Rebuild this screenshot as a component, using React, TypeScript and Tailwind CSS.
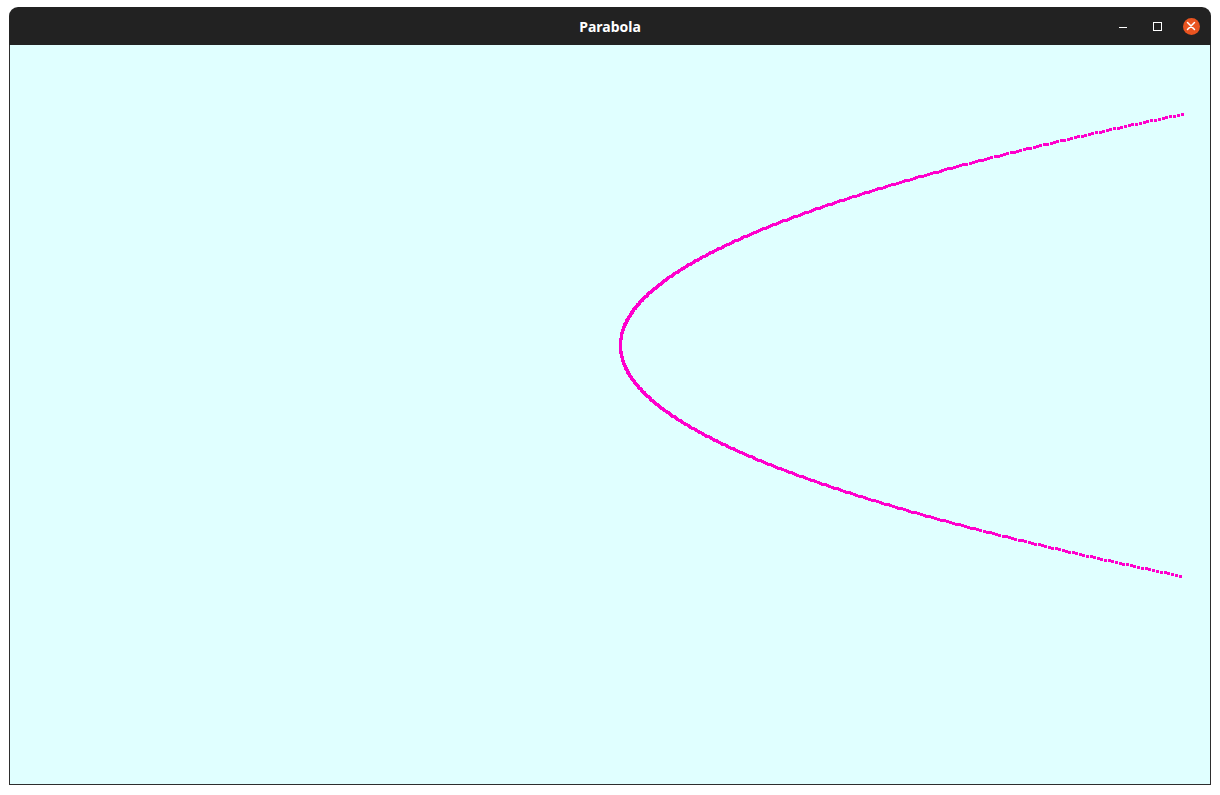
import React from "react";

const pts: { x: number; y: number }[] = [];
for (let s = -231; s <= 231.001; s += 0.8) {
  pts.push({ x: Math.round(610 + 0.01053 * s * s), y: Math.round(300 + s) });
}

export default function App() {
  return (
    <div className="w-[1220px] h-[795px] bg-white pt-[7px] pl-[9px]">
      <div className="w-[1202px] flex flex-col">
        <div className="h-[38px] bg-[#222222] rounded-t-[9px] flex items-center relative">
          <div
            className="flex-1 text-center text-white font-bold text-[14px]"
            style={{ fontFamily: '"Noto Sans", "Open Sans", sans-serif' }}
          >
            Parabola
          </div>
          <div className="absolute right-[3px] top-0 h-[38px] flex items-center">
            <div className="w-[34px] h-[38px] flex items-center justify-center">
              <div className="w-[8px] h-[1px] bg-white mt-[3px]" />
            </div>
            <div className="w-[34px] h-[38px] flex items-center justify-center">
              <div className="w-[9px] h-[9px] border border-white" />
            </div>
            <div className="w-[34px] h-[38px] flex items-center justify-center">
              <div className="w-[17px] h-[17px] rounded-full bg-[#e95420] flex items-center justify-center">
                <svg width="10" height="10" viewBox="0 0 10 10">
                  <path d="M1.5 1.5 L8.5 8.5 M8.5 1.5 L1.5 8.5" stroke="white" strokeWidth="1.5" strokeLinecap="round" />
                </svg>
              </div>
            </div>
          </div>
        </div>
        <div className="h-[740px] bg-[#e0ffff] border-x border-b border-[#2e2e2e]">
          <svg width="1200" height="739" className="block" shapeRendering="crispEdges">
            {pts.map((p, i) => (
              <rect key={i} x={p.x - 1} y={p.y - 1} width="3" height="3" fill="#ff00cc" />
            ))}
          </svg>
        </div>
      </div>
    </div>
  );
}
